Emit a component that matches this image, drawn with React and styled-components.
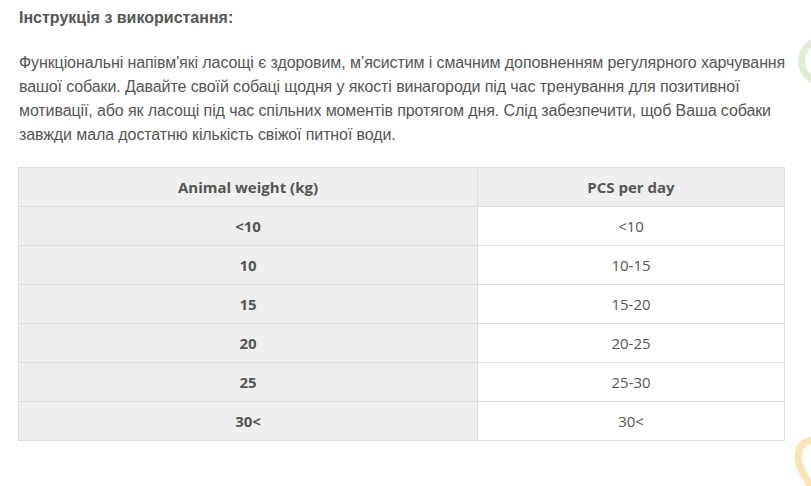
import React from "react";
import styled, { createGlobalStyle } from "styled-components";

const rows = [
  ["<10", "<10"],
  ["10", "10-15"],
  ["15", "15-20"],
  ["20", "20-25"],
  ["25", "25-30"],
  ["30<", "30<"],
];

function App() {
  return (
    <Page>
      <GlobalStyle />
      <Heading>Інструкція з використання:</Heading>
      <Text>
        Функціональні напівм'які ласощі є здоровим, м’ясистим і смачним доповненням регулярного харчування
        <br />
        вашої собаки. Давайте своїй собаці щодня у якості винагороди під час тренування для позитивної
        <br />
        мотивації, або як ласощі під час спільних моментів протягом дня. Слід забезпечити, щоб Ваша собаки
        <br />
        завжди мала достатню кількість свіжої питної води.
      </Text>
      <Table>
        <colgroup>
          <col style={{ width: 459 }} />
          <col />
        </colgroup>
        <thead>
          <tr>
            <Th>Animal weight (kg)</Th>
            <Th>PCS per day</Th>
          </tr>
        </thead>
        <tbody>
          {rows.map(([w, pcs]) => (
            <tr key={w}>
              <Td $key>{w}</Td>
              <Td>{pcs}</Td>
            </tr>
          ))}
        </tbody>
      </Table>
      <GreenRing />
      <YellowPin viewBox="0 0 40 60">
        <path
          d="M20 4 C9 4 4 12 4 21 C4 33 14 44 20 56 C26 44 36 33 36 21 C36 12 31 4 20 4 Z"
          fill="none"
          stroke="#fde5b3"
          strokeWidth="7"
        />
      </YellowPin>
    </Page>
  );
}

export default App;

const GlobalStyle = createGlobalStyle`
  html, body {
    margin: 0;
    padding: 0;
    background: #fff;
    overflow: hidden;
  }
`;

const Page = styled.div`
  position: relative;
  width: 811px;
  height: 486px;
  overflow: hidden;
  padding: 8px 0 0 19px;
  box-sizing: border-box;
  font-family: "Liberation Sans", Arial, sans-serif;
  color: #555;
`;

const Heading = styled.h3`
  margin: 0;
  font-size: 16px;
  line-height: 20px;
  font-weight: 700;
  color: #555;
`;

const Text = styled.p`
  margin: 23px 0 0;
  font-size: 16px;
  line-height: 24px;
  color: #555;
  white-space: nowrap;
  letter-spacing: -0.1px;
`;

const Table = styled.table`
  margin: 20px 0 0 -1px;
  width: 767px;
  table-layout: fixed;
  border-collapse: collapse;
  font-family: "Open Sans", sans-serif;
  font-size: 15px;
  color: #555;
`;

const Th = styled.th`
  height: 38px;
  padding: 0;
  background: #efefef;
  border: 1px solid #dddddd;
  font-weight: 700;
  text-align: center;
`;

const Td = styled.td`
  height: 38px;
  padding: 0;
  border: 1px solid #dddddd;
  text-align: center;
  background: ${(p) => (p.$key ? "#efefef" : "#fff")};
  font-weight: ${(p) => (p.$key ? 700 : 400)};
`;

const GreenRing = styled.div`
  position: absolute;
  left: 798px;
  top: 36px;
  width: 36px;
  height: 36px;
  border: 7px solid #dfecd0;
  border-radius: 50%;
`;

const YellowPin = styled.svg`
  position: absolute;
  left: 794px;
  top: 436px;
  width: 40px;
  height: 60px;
`;
